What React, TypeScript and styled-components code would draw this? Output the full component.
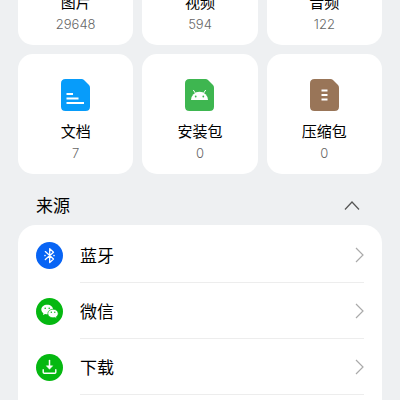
import React, { useState } from "react";
import styled, { createGlobalStyle } from "styled-components";

const GlobalStyle = createGlobalStyle`
  * { box-sizing: border-box; }
  body {
    margin: 0;
    background: #eef0f2;
    color: #000;
    font-family: Inter, "Noto Sans CJK SC", sans-serif;
  }
  button {
    margin: 0;
    border: 0;
    font: inherit;
    color: inherit;
    cursor: pointer;
  }
  svg { display: block; flex: none; }
`;

const Screen = styled.main`
  display: flex;
  flex-direction: column;
  height: 100vh;
  overflow: hidden;
`;

/* The page is shown scrolled down, with the first row of cards partly out of view. */
const Scrolled = styled.div`
  display: flex;
  flex-direction: column;
  flex: none;
  margin-top: -75px;
  padding: 0 18px;
`;

const CardGrid = styled.section`
  display: grid;
  grid-template-columns: repeat(3, 1fr);
  gap: 9px;
`;

const Card = styled.button`
  display: flex;
  flex-direction: column;
  align-items: center;
  padding: 25px 8px 11px;
  border-radius: 15px;
  background: #fff;
`;

const CardLabel = styled.span`
  margin-top: 11px;
  font-size: 15px;
  line-height: 20px;
`;

const CardCount = styled.span`
  margin-top: 1px;
  font-size: 13px;
  line-height: 20px;
  font-weight: 300;
  color: #666;
`;

const SectionHeader = styled.button`
  display: flex;
  align-items: center;
  justify-content: space-between;
  padding: 20px 22px 7px 18px;
  background: transparent;
`;

const SectionTitle = styled.span`
  font-size: 17px;
  line-height: 24px;
`;

const SourceList = styled.ul`
  margin: 0;
  padding: 2px 18px 24px;
  list-style: none;
  border-radius: 18px;
  background: #fff;
`;

const SourceRow = styled.button`
  display: flex;
  align-items: center;
  gap: 17px;
  width: 100%;
  padding: 0;
  background: transparent;
  text-align: left;
`;

const SourceBody = styled.span`
  display: flex;
  flex: 1;
  align-items: center;
  justify-content: space-between;
  height: 56px;
  border-bottom: 1px solid #ededed;
`;

const SourceName = styled.span`
  padding-top: 2px;
  font-size: 17px;
  line-height: 24px;
`;

function FileIcon({ color, children }: { color: string; children?: React.ReactNode }) {
  return (
    <svg width="29" height="32" viewBox="0 0 29 32" aria-hidden="true">
      <path
        d="M4.500 0H20.500Q22 0 23 1L28 6Q29 7 29 8.500V27.500Q29 32 24.500 32H4.500Q0 32 0 27.500V4.500Q0 0 4.500 0Z"
        fill={color}
      />
      {children}
    </svg>
  );
}

const documentIcon = (
  <FileIcon color="#079cfa">
    <path d="M5.500 15H12M5.500 19.500H17.500M5.500 24H23" stroke="#fff" strokeWidth="2" />
  </FileIcon>
);

const packageIcon = (
  <FileIcon color="#3eb650">
    <path d="M6 21a8.500 8.200 0 0 1 17 0Z" fill="#fff" />
    <path d="M8.500 11.300l2.300 3.500M20.500 11.300l-2.300 3.500" stroke="#fff" strokeWidth="1" strokeLinecap="round" />
    <circle cx="10.700" cy="17.500" r="0.900" fill="#3eb650" />
    <circle cx="18.300" cy="17.500" r="0.900" fill="#3eb650" />
  </FileIcon>
);

const archiveIcon = (
  <FileIcon color="#997558">
    <path d="M11.500 11.500H17.500M11.500 16H17.500M11.500 20.500H17.500" stroke="#fff" strokeWidth="2" />
  </FileIcon>
);

const cards = [
  { label: "图片", count: 29648, icon: <FileIcon color="#f7b52c" /> },
  { label: "视频", count: 594, icon: <FileIcon color="#7a5cf0" /> },
  { label: "音频", count: 122, icon: <FileIcon color="#f0566a" /> },
  { label: "文档", count: 7, icon: documentIcon },
  { label: "安装包", count: 0, icon: packageIcon },
  { label: "压缩包", count: 0, icon: archiveIcon },
];

function RoundIcon({ color, children }: { color: string; children: React.ReactNode }) {
  return (
    <svg width="27" height="27" viewBox="0 0 27 27" fill="none" aria-hidden="true">
      <circle cx="13.500" cy="13.500" r="13.500" fill={color} />
      {children}
    </svg>
  );
}

const sources = [
  {
    name: "蓝牙",
    icon: (
      <RoundIcon color="#0864f4">
        <path
          d="M9.300 9.600L17.500 17L13.700 20.600V6.600L17.500 10.200L9.300 17.600"
          stroke="#fff"
          strokeWidth="1.300"
          strokeLinejoin="round"
          strokeLinecap="round"
        />
        <circle cx="9" cy="13.600" r="0.800" fill="#fff" />
        <circle cx="18" cy="13.600" r="0.800" fill="#fff" />
      </RoundIcon>
    ),
  },
  {
    name: "微信",
    icon: (
      <RoundIcon color="#05b811">
        <path
          d="M11.200 6.700C7.900 6.700 5.300 8.800 5.300 11.500C5.300 13 6.100 14.300 7.400 15.200L6.900 17.100L9.100 16C9.800 16.200 10.500 16.300 11.200 16.300C14.500 16.300 17.100 14.200 17.100 11.500S14.500 6.700 11.200 6.700Z"
          fill="#fff"
        />
        <path
          d="M17 11.200C14.100 11.200 11.800 13.100 11.800 15.500S14.100 19.800 17 19.800C17.600 19.800 18.200 19.700 18.800 19.500L20.700 20.500L20.300 18.800C21.500 18 22.200 16.800 22.200 15.500C22.200 13.100 19.900 11.200 17 11.200Z"
          fill="#fff"
          stroke="#05b811"
          strokeWidth="0.700"
        />
        <circle cx="9.200" cy="10.200" r="0.800" fill="#05b811" />
        <circle cx="13.200" cy="10.200" r="0.800" fill="#05b811" />
        <circle cx="15.300" cy="14.300" r="0.700" fill="#05b811" />
        <circle cx="18.800" cy="14.300" r="0.700" fill="#05b811" />
      </RoundIcon>
    ),
  },
  {
    name: "下载",
    icon: (
      <RoundIcon color="#05b811">
        <path d="M13.500 6.500V13" stroke="#fff" strokeWidth="1.500" strokeLinecap="round" />
        <path d="M10.300 11.800H16.700L13.500 15.300Z" fill="#fff" stroke="#fff" strokeWidth="0.500" strokeLinejoin="round" />
        <path
          d="M7.200 15.800V18.200Q7.200 19.300 8.300 19.300H18.700Q19.800 19.300 19.800 18.200V15.800"
          stroke="#fff"
          strokeWidth="1.400"
          strokeLinecap="round"
        />
      </RoundIcon>
    ),
  },
];

export default function App() {
  const [open, setOpen] = useState(true);

  return (
    <Screen>
      <GlobalStyle />
      <Scrolled>
        <CardGrid>
          {cards.map((card) => (
            <Card key={card.label} type="button">
              {card.icon}
              <CardLabel>{card.label}</CardLabel>
              <CardCount>{card.count}</CardCount>
            </Card>
          ))}
        </CardGrid>
        <SectionHeader type="button" aria-expanded={open} onClick={() => setOpen(!open)}>
          <SectionTitle>来源</SectionTitle>
          <svg width="16" height="10" viewBox="0 0 16 10" fill="none" aria-hidden="true">
            <path d={open ? "M1 8.500L8 1L15 8.500" : "M1 1L8 8.500L15 1"} stroke="#555" strokeWidth="1.200" />
          </svg>
        </SectionHeader>
        {open && (
          <SourceList>
            {sources.map((source) => (
              <li key={source.name}>
                <SourceRow type="button">
                  {source.icon}
                  <SourceBody>
                    <SourceName>{source.name}</SourceName>
                    <svg width="9" height="16" viewBox="0 0 9 16" fill="none" aria-hidden="true">
                      <path d="M1 1L8 8L1 15" stroke="#aaa" strokeWidth="1.200" />
                    </svg>
                  </SourceBody>
                </SourceRow>
              </li>
            ))}
          </SourceList>
        )}
      </Scrolled>
    </Screen>
  );
}
